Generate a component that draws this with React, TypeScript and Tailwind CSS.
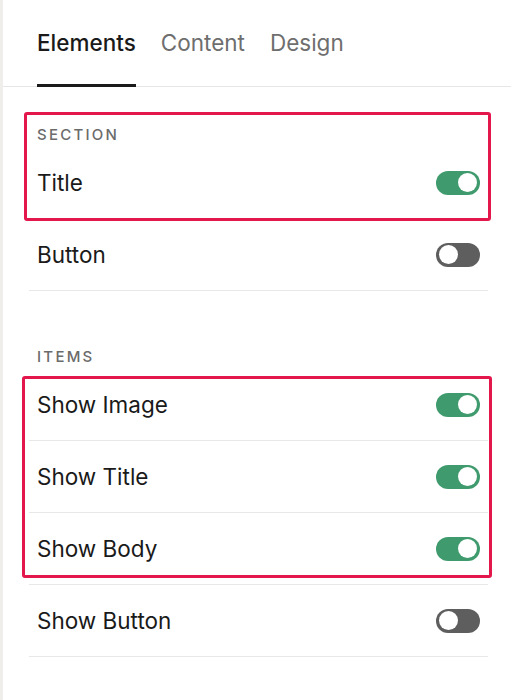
import { ReactNode } from 'react';

function Toggle({ on }: { on: boolean }) {
  return (
    <div
      className={
        on
          ? 'w-[44px] h-[24px] rounded-full bg-[#3f9b6d] flex items-center justify-end px-[3px]'
          : 'w-[44px] h-[24px] rounded-full bg-[#5e5e5e] flex items-center justify-start px-[3px]'
      }
    >
      <div className="w-[19px] h-[19px] rounded-full bg-white" />
    </div>
  );
}

function Row({ label, on }: { label: string; on: boolean }) {
  return (
    <div className="h-[72px] border-b border-[#e8e8e8] flex items-center justify-between px-2">
      <span className="mt-[2px] text-[22.5px] leading-none text-[#1a1a1a]">{label}</span>
      <Toggle on={on} />
    </div>
  );
}

function Label({ children }: { children: ReactNode }) {
  return (
    <div className="h-[20px] leading-[20px] px-2 text-[15px] tracking-[0.15em] text-[#6b6b6b] font-medium">
      {children}
    </div>
  );
}

export default function App() {
  return (
    <div
      className="relative w-[511px] h-[700px] bg-white border-l-[3px] border-[#efeeea] overflow-hidden"
      style={{ fontFamily: 'Inter, "Liberation Sans", sans-serif' }}
    >
      {/* Tabs */}
      <div className="h-[87px] border-b border-[#e6e6e6] flex items-end gap-[25px] pl-[34px]">
        <div className="h-full flex flex-col justify-between">
          <span className="pt-[26px] text-[22.5px] font-medium text-[#1a1a1a]">Elements</span>
          <div className="h-[3px] bg-[#1a1a1a] -mb-px" />
        </div>
        <div className="h-full">
          <span className="block pt-[26px] text-[22.5px] text-[#6e6e6e]">Content</span>
        </div>
        <div className="h-full">
          <span className="block pt-[26px] text-[22.5px] text-[#6e6e6e]">Design</span>
        </div>
      </div>

      <div className="pl-[26px] pr-[23px]">
        {/* Section */}
        <div className="pt-[38px]">
          <Label>SECTION</Label>
          <div className="mt-[2px]">
            <Row label="Title" on />
            <Row label="Button" on={false} />
          </div>
        </div>

        {/* Items */}
        <div className="pt-[56px]">
          <Label>ITEMS</Label>
          <div className="mt-[2px]">
            <Row label="Show Image" on />
            <Row label="Show Title" on />
            <Row label="Show Body" on />
            <Row label="Show Button" on={false} />
          </div>
        </div>
      </div>

      {/* highlight annotations */}
      <div className="absolute left-[21px] top-[112px] w-[467px] h-[109px] border-[3px] border-[#e3174b] rounded-[3px]" />
      <div className="absolute left-[19px] top-[376px] w-[470px] h-[202px] border-[3px] border-[#e3174b] rounded-[3px]" />
    </div>
  );
}
